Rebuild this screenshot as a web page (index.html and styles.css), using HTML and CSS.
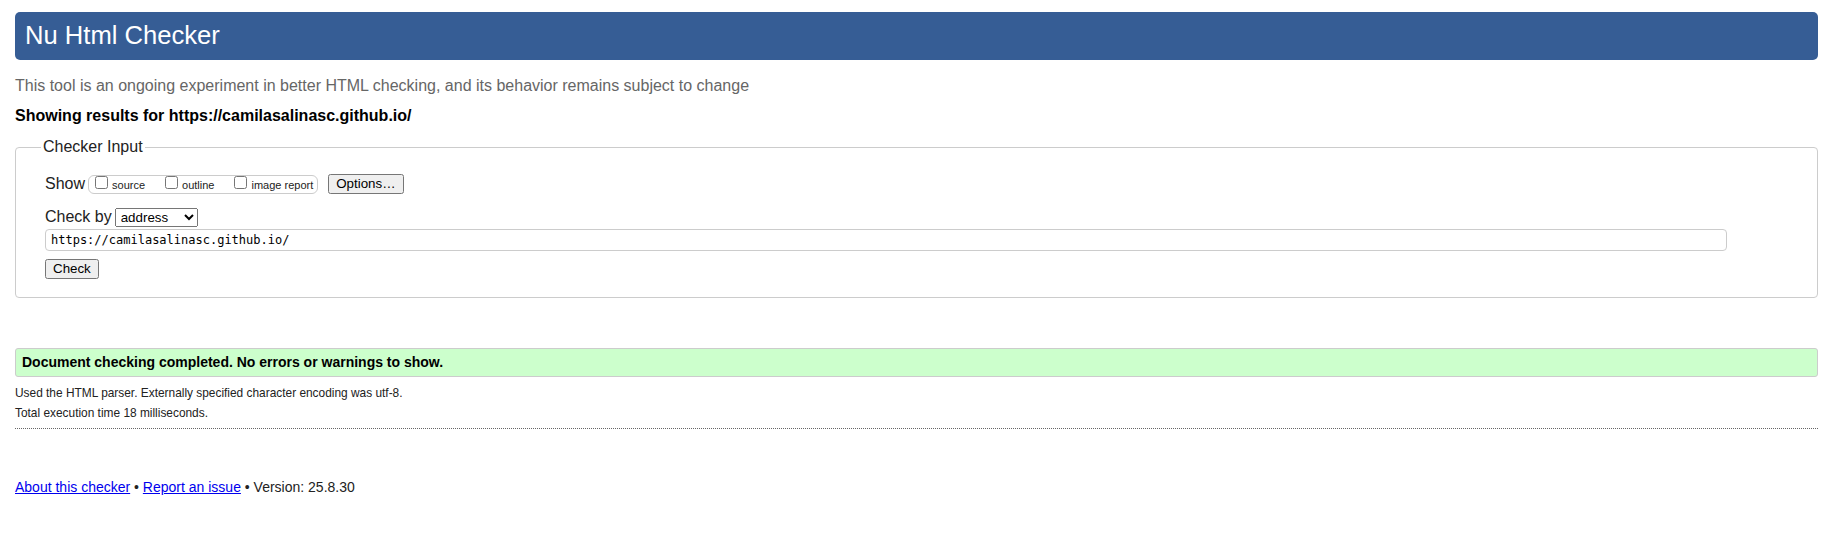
FILE: index.html
```html
<!DOCTYPE html>
<html lang="en">
<head>
<meta charset="utf-8">
<title>Nu Html Checker</title>
<link rel="stylesheet" href="styles.css">
</head>
<body>
<h1 class="title">Nu Html Checker</h1>
<p class="intro">This tool is an ongoing experiment in better HTML checking, and its behavior remains subject to change</p>
<p class="showing">Showing results for https://camilasalinasc.github.io/</p>
<form class="form">
  <fieldset class="checker">
    <legend class="legend">Checker Input</legend>
    <div class="row">
      <span class="label">Show</span>
      <span class="group">
        <label class="opt"><input type="checkbox" class="cb">source</label>
        <label class="opt"><input type="checkbox" class="cb">outline</label>
        <label class="opt last"><input type="checkbox" class="cb">image report</label>
      </span>
      <button type="button" class="btn options">Options…</button>
    </div>
    <div class="row row2">
      <span class="label">Check by</span>
      <select class="sel"><option>address</option></select>
    </div>
    <input type="text" class="url" value="https://camilasalinasc.github.io/">
    <div class="submit"><button type="button" class="btn">Check</button></div>
  </fieldset>
</form>
<div class="success">Document checking completed. No errors or warnings to show.</div>
<p class="info info-first">Used the HTML parser. Externally specified character encoding was utf-8.</p>
<p class="info">Total execution time 18 milliseconds.</p>
<hr class="sep">
<p class="footer"><a href="#">About this checker</a> • <a href="#">Report an issue</a> • Version: 25.8.30</p>
</body>
</html>
```
FILE: styles.css
```css
html, body {
  margin: 0;
  padding: 0;
  background: #fff;
}
body {
  padding: 0 14px 0 15px;
  font-family: "Liberation Sans", Arial, sans-serif;
  color: #222;
}
.title {
  margin: 12px 0 0;
  height: 48px;
  box-sizing: border-box;
  padding: 0 10px 2px;
  background: #365d95;
  color: #fff;
  border-radius: 5px;
  font-size: 25.6px;
  font-weight: normal;
  line-height: 46px;
}
.intro {
  margin: 16px 0 0;
  font-size: 16px;
  line-height: 20px;
  color: #666;
}
.showing {
  margin: 10px 0 0;
  font-size: 16px;
  line-height: 20px;
  font-weight: bold;
  color: #000;
}
.form {
  margin: 11px 0 0;
}
.checker {
  margin: 0;
  border: 1px solid #ccc;
  border-radius: 4px;
  padding: 17px 20px 18px 29px;
  min-width: 0;
}
.legend {
  font-size: 16px;
  line-height: 20px;
  padding: 0 2px;
  margin-left: -4px;
  color: #222;
}
.row {
  display: flex;
  align-items: center;
  height: 20px;
}
.row2 {
  margin-top: 13px;
}
.label {
  font-size: 16px;
  line-height: 20px;
  margin-right: 3px;
}
.group {
  display: inline-flex;
  align-items: center;
  height: 19px;
  box-sizing: border-box;
  margin-top: 1px;
  border: 1px solid #ccc;
  border-radius: 6px;
  padding: 0 4px 0 2px;
  font-size: 11px;
}
.opt {
  display: inline-flex;
  align-items: center;
  margin-right: 16px;
  line-height: 14px;
}
.opt.last {
  margin-right: 0;
}
.cb {
  width: 13px;
  height: 13px;
  margin: 0 4px 0 4px;
  position: relative;
  top: -2px;
}
.btn {
  font-family: "Liberation Sans", Arial, sans-serif;
  font-size: 13.33px;
  height: 20px;
  padding: 0 6px;
  line-height: 16px;
}
.options {
  margin-left: 10px;
}
.sel {
  font-family: "Liberation Sans", Arial, sans-serif;
  font-size: 13.33px;
  height: 19px;
  width: 83px;
  padding: 0 0 0 1px;
}
.url {
  display: block;
  box-sizing: border-box;
  margin: 2px 0 0;
  width: 1682px;
  height: 22px;
  border: 1px solid #ccc;
  border-radius: 4px;
  padding: 0 5px;
  font-family: "DejaVu Sans Mono", monospace;
  font-size: 12px;
  color: #000;
}
.submit {
  margin-top: 8px;
  height: 20px;
}
.success {
  margin-top: 50px;
  height: 29px;
  box-sizing: border-box;
  border: 1px solid #ccc;
  border-radius: 3px;
  background: #ccffcc;
  padding: 5px 6px;
  font-size: 14px;
  line-height: 17px;
  font-weight: bold;
  color: #000;
}
.info {
  margin: 0;
  font-size: 11.9px;
  line-height: 20px;
}
.info-first {
  margin-top: 6px;
}
.sep {
  margin: 5px 0 0;
  height: 0;
  border: 0;
  border-top: 1px dotted #666;
}
.footer {
  margin: 48px 0 0;
  font-size: 14px;
  line-height: 20px;
}
.footer a {
  color: #0000ee;
  text-decoration: underline;
}
```
